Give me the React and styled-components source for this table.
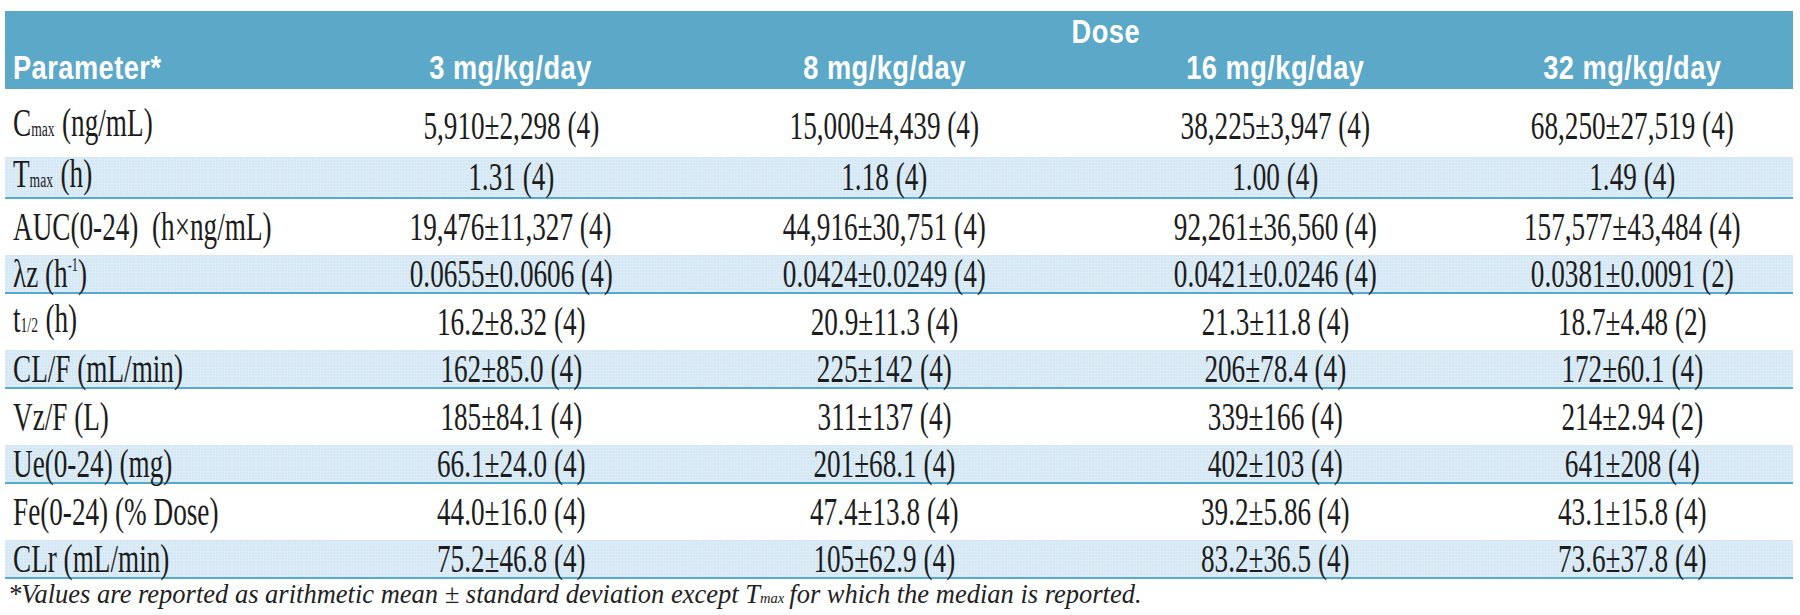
import React from 'react'
import styled, { createGlobalStyle } from 'styled-components'

const GlobalStyle = createGlobalStyle`
    html, body {
        margin: 0;
        padding: 0;
        background: #ffffff;
    }

    body {
        padding: 11px 0 0 5px;
        font-family: "Liberation Serif", "Times New Roman", serif;
        color: #1a1a1a;
    }
`

const doses = ['3 mg/kg/day', '8 mg/kg/day', '16 mg/kg/day', '32 mg/kg/day']
const colWidths = [325, 360, 386, 394, 320]

const rows = [
    { label: <>C<Sub>max</Sub> (ng/mL)</>, values: ['5,910±2,298 (4)', '15,000±4,439 (4)', '38,225±3,947 (4)', '68,250±27,519 (4)'] },
    { label: <>T<Sub>max</Sub> (h)</>, values: ['1.31 (4)', '1.18 (4)', '1.00 (4)', '1.49 (4)'] },
    { label: <>AUC(0-24)&nbsp; (h×ng/mL)</>, values: ['19,476±11,327 (4)', '44,916±30,751 (4)', '92,261±36,560 (4)', '157,577±43,484 (4)'] },
    { label: <>λz (h<Sup>-1</Sup>)</>, values: ['0.0655±0.0606 (4)', '0.0424±0.0249 (4)', '0.0421±0.0246 (4)', '0.0381±0.0091 (2)'] },
    { label: <>t<Sub>1/2</Sub> (h)</>, values: ['16.2±8.32 (4)', '20.9±11.3 (4)', '21.3±11.8 (4)', '18.7±4.48 (2)'] },
    { label: 'CL/F (mL/min)', values: ['162±85.0 (4)', '225±142 (4)', '206±78.4 (4)', '172±60.1 (4)'] },
    { label: 'Vz/F (L)', values: ['185±84.1 (4)', '311±137 (4)', '339±166 (4)', '214±2.94 (2)'] },
    { label: 'Ue(0-24) (mg)', values: ['66.1±24.0 (4)', '201±68.1 (4)', '402±103 (4)', '641±208 (4)'] },
    { label: 'Fe(0-24) (% Dose)', values: ['44.0±16.0 (4)', '47.4±13.8 (4)', '39.2±5.86 (4)', '43.1±15.8 (4)'] },
    { label: 'CLr (mL/min)', values: ['75.2±46.8 (4)', '105±62.9 (4)', '83.2±36.5 (4)', '73.6±37.8 (4)'] },
]

function Sub({ children }) {
    return <SubText>{children}</SubText>
}

function Sup({ children }) {
    return <SupText>{children}</SupText>
}

const SubText = styled.span`
    font-size: 0.5em;
    margin-right: 1px;
`

const SupText = styled.span`
    font-size: 0.45em;
    line-height: 0;
    vertical-align: 0.9em;
`

const Wrap = styled.div`
    width: 1788px;
`

const Table = styled.table`
    width: 1788px;
    table-layout: fixed;
    border-collapse: collapse;
    border-spacing: 0;
`

const HeadRow = styled.tr`
    background: #5ba8c9;
    height: ${props => props.$h}px;
`

const HeadCell = styled.th`
    padding: ${props => props.$pad || '0'};
    text-align: ${props => props.$align || 'center'};
    vertical-align: ${props => props.$valign || 'middle'};
    color: #ffffff;
    font-family: "Liberation Sans", Arial, sans-serif;
    font-weight: 700;
    font-size: 34px;
    letter-spacing: 0.6px;
    line-height: 1;
    white-space: nowrap;
`

const Row = styled.tr`
    height: ${props => props.$shade ? 38 : props.$first ? 68 : 57}px;
    background-color: ${props => props.$shade ? '#d3e7f4' : '#ffffff'};
    background-image: ${props => props.$shade
        ? 'repeating-linear-gradient(90deg, rgba(255,255,255,0.18) 0 1px, transparent 1px 3px), repeating-linear-gradient(0deg, rgba(255,255,255,0.18) 0 1px, transparent 1px 3px)'
        : 'none'};
    border-bottom: ${props => props.$shade ? '2px solid #55abcd' : 'none'};
`

const Cell = styled.td`
    padding: ${props => props.$label ? '0 0 0 8px' : '0'};
    padding-top: ${props => props.$first ? '6px' : '0'};
    text-align: ${props => props.$label ? 'left' : 'center'};
    vertical-align: middle;
    font-size: 40px;
    line-height: 34px;
    color: #1c1c1c;
    white-space: nowrap;
`

const Squeeze = styled.span`
    display: inline-block;
    transform: scaleX(${props => props.$x});
    transform-origin: ${props => props.$origin || 'center'} center;
`

const Note = styled.p`
    margin: 0 0 0 3px;
    font-family: "Liberation Serif", "Times New Roman", serif;
    font-style: italic;
    font-size: 26.5px;
    line-height: 30px;
    color: #222222;
    white-space: nowrap;
`

const NoteSub = styled.span`
    font-size: 0.55em;
    margin-right: 5px;
`

const App = () => {
    return (
        <Wrap>
            <GlobalStyle />
            <Table>
                <colgroup>
                    {colWidths.map((w, i) => <col key={i} style={{ width: w }} />)}
                </colgroup>
                <thead>
                    <HeadRow $h={37}>
                        <HeadCell />
                        <HeadCell colSpan={4} $pad='3px 0 0 88px' $valign='top'>
                            <Squeeze $x={0.8}>Dose</Squeeze>
                        </HeadCell>
                    </HeadRow>
                    <HeadRow $h={41}>
                        <HeadCell $align='left' $pad='0 0 5px 8px' $valign='bottom'>
                            <Squeeze $x={0.8} $origin='left'>Parameter*</Squeeze>
                        </HeadCell>
                        {doses.map(d => (
                            <HeadCell key={d} $pad='0 0 5px 0' $valign='bottom'>
                                <Squeeze $x={0.8}>{d}</Squeeze>
                            </HeadCell>
                        ))}
                    </HeadRow>
                </thead>
                <tbody>
                    {rows.map((r, i) => (
                        <Row key={i} $shade={i % 2 === 1} $first={i === 0}>
                            <Cell $label $first={i === 0}>
                                <Squeeze $x={0.68} $origin='left'>{r.label}</Squeeze>
                            </Cell>
                            {r.values.map((v, j) => (
                                <Cell key={j} $first={i === 0}>
                                    <Squeeze $x={0.68}>{v}</Squeeze>
                                </Cell>
                            ))}
                        </Row>
                    ))}
                </tbody>
            </Table>
            <Note>
                *Values are reported as arithmetic mean ± standard deviation except T<NoteSub>max</NoteSub>for which the median is reported.
            </Note>
        </Wrap>
    )
}

export default App
